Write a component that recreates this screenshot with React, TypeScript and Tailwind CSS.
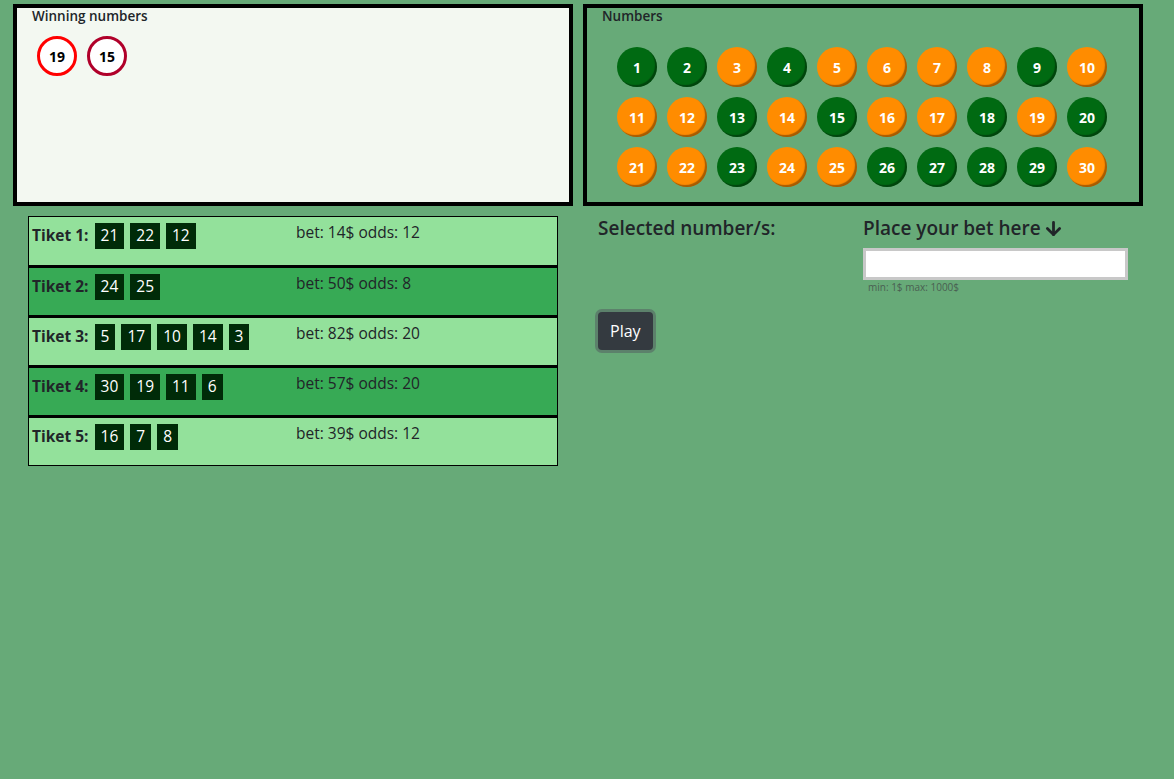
import React from "react";
import { ArrowDown } from "lucide-react";

const green = new Set([1, 2, 4, 9, 13, 15, 18, 20, 23, 26, 27, 28, 29]);

const tickets = [
  { nums: [21, 22, 12], bet: 14, odds: 12 },
  { nums: [24, 25], bet: 50, odds: 8 },
  { nums: [5, 17, 10, 14, 3], bet: 82, odds: 20 },
  { nums: [30, 19, 11, 6], bet: 57, odds: 20 },
  { nums: [16, 7, 8], bet: 39, odds: 12 },
];

function Ball({ n }: { n: number }) {
  const g = green.has(n);
  return (
    <div
      className={
        "w-[40px] h-[40px] rounded-full flex items-center justify-center text-white font-bold text-[14px] shadow-[inset_-2px_-2px_1px_rgba(0,0,0,0.35)] " +
        (g ? "bg-[#006a12]" : "bg-[#ff8c00]")
      }
    >
      {n}
    </div>
  );
}

export default function App() {
  const nums = Array.from({ length: 30 }, (_, i) => i + 1);
  return (
    <div className="min-h-screen bg-[#67aa78] font-['Open_Sans',sans-serif] text-[#212529]">
      <div className="flex gap-[10px] pl-[13px] pt-[4px]">
        <div className="w-[560px] h-[202px] border-4 border-black bg-[#f3f8f1]">
          <div className="pl-[15px] text-[13.5px] font-semibold leading-[17px]">Winning numbers</div>
          <div className="flex gap-[10px] pl-[20px] mt-[11px]">
            <div className="w-[40px] h-[40px] rounded-full border-[3px] border-[#ff0000] bg-white flex items-center justify-center text-[14px] font-bold text-black">19</div>
            <div className="w-[40px] h-[40px] rounded-full border-[3px] border-[#b0002a] bg-white flex items-center justify-center text-[14px] font-bold text-black">15</div>
          </div>
        </div>
        <div className="w-[560px] h-[202px] border-4 border-black">
          <div className="pl-[15px] text-[13.5px] font-semibold leading-[17px]">Numbers</div>
          <div className="grid grid-cols-[repeat(10,40px)] gap-[10px] pl-[30px] mt-[22px]">
            {nums.map((n) => (
              <Ball key={n} n={n} />
            ))}
          </div>
        </div>
      </div>

      <div className="flex gap-[10px] pl-[13px] pt-[10px]">
        <div className="w-[560px] pl-[15px]">
          <div className="w-[530px]">
            {tickets.map((t, i) => (
              <div
                key={i}
                className={
                  "flex h-[50px] border border-black pl-[3px] " +
                  (i > 0 ? "border-t-2 " : "") +
                  (i % 2 === 0 ? "bg-[#93e19b]" : "bg-[#37aa55]")
                }
              >
                <div className="w-[264px] flex items-center gap-[6px] self-start pt-[6px]">
                  <span className="font-bold text-[15.5px]">Tiket {i + 1}:</span>
                  {t.nums.map((n, j) => (
                    <span
                      key={j}
                      className="h-[26px] px-[6px] bg-[#002b08] text-white text-[15.5px] flex items-center"
                    >
                      {n}
                    </span>
                  ))}
                </div>
                <div className="pt-[3px] text-[15.5px] leading-6">
                  bet: {t.bet}$ odds: {t.odds}
                </div>
              </div>
            ))}
          </div>
        </div>

        <div className="w-[560px] pl-[15px]">
          <div className="flex w-[530px]">
            <div className="w-[265px] text-[19px] font-semibold leading-6">Selected number/s:</div>
            <div className="w-[265px]">
              <div className="text-[19px] font-semibold leading-6 flex items-center gap-[2px]">
                Place your bet here
                <ArrowDown size={21} strokeWidth={3.2} />
              </div>
              <input
                type="text"
                className="mt-[8px] w-[265px] h-[32px] border-[3px] border-[#c8c8c8] bg-white outline-none"
              />
              <div className="pl-[5px] text-[10px] leading-[14px] text-[#4a5f52]">min: 1$ max: 1000$</div>
            </div>
          </div>
          <button className="mt-[18px] h-[38px] px-[12px] bg-[#343a40] text-white text-[16px] rounded-[4px] shadow-[0_0_0_3px_rgba(82,88,93,0.5)]">
            Play
          </button>
        </div>
      </div>
    </div>
  );
}
